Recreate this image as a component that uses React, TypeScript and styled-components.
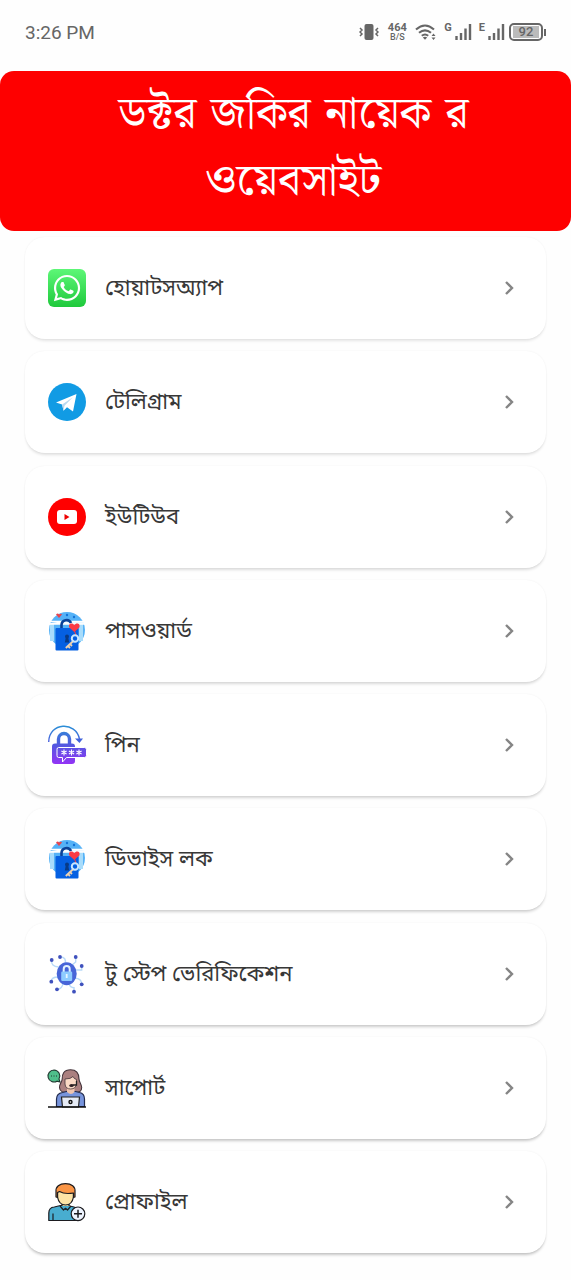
import React from "react";
import styled, { createGlobalStyle } from "styled-components";
import { FaWhatsapp } from "react-icons/fa";

const GlobalStyle = createGlobalStyle`
  * { box-sizing: border-box; }
  body {
    margin: 0;
    background: #fefefe;
    color: #383838;
    font-family: "Noto Sans Bengali", "Noto Sans", Roboto, sans-serif;
  }
`;

const Page = styled.div`
  min-height: 100vh;
  display: flex;
  flex-direction: column;
`;

const StatusBar = styled.div`
  display: flex;
  align-items: center;
  justify-content: space-between;
  height: 64px;
  padding: 0 25px;
  color: #666;
  font-family: Roboto, sans-serif;
`;

const Clock = styled.time`
  font-size: 19px;
`;

const StatusIcons = styled.div`
  display: flex;
  align-items: center;
`;

const Speed = styled.div`
  width: 20px;
  margin: 0 8px;
  text-align: center;
  font-size: 11px;
  font-weight: 700;
  line-height: 10px;
  small {
    display: block;
    font-size: 9px;
    font-weight: 500;
    line-height: 9px;
  }
`;

const Signal = styled.div`
  display: flex;
  align-items: flex-start;
  gap: 2px;
  margin-left: 7px;
  font-size: 11px;
  font-weight: 700;
  line-height: 10px;
`;

const Battery = styled.div`
  display: flex;
  align-items: center;
  margin-left: 4px;
`;

const BatteryBody = styled.div`
  width: 34px;
  height: 18px;
  border: 2px solid #666;
  border-radius: 5px;
  padding: 1px 2px;
`;

const BatteryLevel = styled.div`
  background: #bbb;
  font-size: 13px;
  font-weight: 500;
  line-height: 12px;
  text-align: center;
`;

const BatteryCap = styled.div`
  width: 2px;
  height: 7px;
  margin-left: 1px;
  background: #666;
`;

const Banner = styled.header`
  margin-top: 7px;
  padding: 8px 84px 18px 100px;
  background: #fe0000;
  border-radius: 14px;
`;

const Title = styled.h1`
  margin: 0;
  color: #fff;
  font-family: "DejaVu Serif", "Noto Serif Bengali", serif;
  font-size: 45px;
  font-weight: 400;
  line-height: 67px;
  text-align: center;
`;

const Menu = styled.nav`
  flex: 1;
  display: flex;
  flex-direction: column;
  justify-content: space-between;
  gap: 12px;
  padding: 6px 25px 27px;
`;

const Card = styled.button<{ $depth: number }>`
  display: flex;
  align-items: center;
  gap: 19px;
  width: 100%;
  height: 102px;
  padding: 0 31px 0 23px;
  border: 0;
  border-radius: 20px;
  background: #fff;
  color: inherit;
  font-family: inherit;
  text-align: left;
  box-shadow:
    0 0 2px rgba(0, 0, 0, 0.06),
    0 3px 3px -1px rgba(0, 0, 0, ${(p) => 0.1 + p.$depth * 0.016});
`;

const Label = styled.span`
  flex: 1;
  padding-top: 4px;
  font-size: 22px;
  line-height: 32px;
`;

const WhatsAppTile = styled.span`
  display: grid;
  place-items: center;
  width: 38px;
  height: 38px;
  border-radius: 6px;
  background: linear-gradient(#5df777, #1fc93c);
  color: #fff;
`;

const Icon = ({ children }: { children: React.ReactNode }) => (
  <svg width="38" height="38" viewBox="0 0 38 38" fill="none" overflow="visible" aria-hidden="true">
    {children}
  </svg>
);

const WhatsAppIcon = () => (
  <WhatsAppTile>
    <FaWhatsapp size={30} />
  </WhatsAppTile>
);

const TelegramIcon = () => (
  <Icon>
    <circle cx="19" cy="19" r="19" fill="#119be4" />
    <path d="M8 19.5 28.500 11 25 28.500l-6-4.300-3.500 3.600-1.400-6.300z" fill="#fff" />
    <path d="m14.200 21.400 10.600-7.200-8.300 8.500-1 5z" fill="#b9d9ef" />
  </Icon>
);

const YouTubeIcon = () => (
  <Icon>
    <circle cx="19" cy="19" r="19" fill="#f00" />
    <rect x="9" y="12" width="20" height="14" rx="3" fill="#fff" />
    <path d="m16.500 16 5 3-5 3z" fill="#e00" />
  </Icon>
);

const PasswordIcon = () => (
  <Icon>
    <circle cx="19" cy="18" r="18" fill="#55b2f7" />
    <path d="M4 12v17M33 12v17" stroke="#a8dcfb" strokeWidth="4" />
    <path d="M1 9.500h13M22 9.500h14l1 2.500H1z" stroke="#fff" strokeWidth="1.400" fill="#e9f6ff" />
    <circle cx="19" cy="3" r="1.200" fill="#1574d8" />
    <circle cx="26" cy="5" r="1.200" fill="#1574d8" />
    <path d="M8 2.500q2-2 3 0 2-1.500 3 0L11 6z" fill="#e8434e" />
    <path d="M13.500 17v-4a5 5 0 0 1 9.500-2" stroke="#0b4298" strokeWidth="2.600" />
    <rect x="7.500" y="16" width="23" height="22.500" rx="1" fill="#0560e2" />
    <path d="M17 24.500a2 2 0 1 1 4 0l-.6 2 .8 4h-4.400l.8-4z" fill="#083a86" />
    <path d="M26.300 20 21.300 15.500c-1.600-4 3-5.500 5-2.500 2-3 6.600-1.500 5 2.500z" fill="#fb3b46" />
    <path d="m26.500 19 1.500 4" stroke="#fb3b46" />
    <path d="m25.800 28.500-8 7.500M20 34l2 2M22 32l2 2" stroke="#efd3b0" strokeWidth="1.800" />
    <circle cx="27" cy="26.500" r="3.200" stroke="#c8e6ff" strokeWidth="2" />
  </Icon>
);

const PinIcon = () => (
  <Icon>
    <defs>
      <linearGradient id="pin" x1="0" y1="0" x2="0" y2="38" gradientUnits="userSpaceOnUse">
        <stop stopColor="#2b8fd6" />
        <stop offset=".5" stopColor="#5358e0" />
        <stop offset="1" stopColor="#9333f5" />
      </linearGradient>
    </defs>
    <path d="M.7 16C1-4 28-5 31.500 13" stroke="url(#pin)" strokeWidth="1.400" />
    <path d="M27 12.500h8L31.500 17z" fill="#4163db" />
    <path d="M10.500 19v-6a5.500 5.500 0 0 1 11 0v6" stroke="url(#pin)" strokeWidth="3.400" />
    <rect x="4" y="17.500" width="23" height="20.500" rx="3" fill="url(#pin)" />
    <path d="M10.500 21.500h26q2 0 2 2v6q0 2-2 2H18.500L14.500 36v-4.500h-4q-1.500 0-1.500-2v-6q0-2 1.500-2z" fill="url(#pin)" stroke="#fff" />
    {[16, 23.5, 31].map((x) => (
      <path key={x} d={`M${x} 23.500v6M${x - 2.6} 25l5.200 3M${x - 2.6} 28l5.200-3`} stroke="#fff" strokeWidth="1.100" />
    ))}
  </Icon>
);

const TwoStepIcon = () => (
  <Icon>
    <path
      d="M3.700 5q-1 6.500 7 7M12 2q7 0 5 7M27.700 2v5q-3 2-4 4M33.700 11v4h-6M3.300 26.700q0-4.700 7-4.700M9 34.300q5 0 6-6M33.700 29.300q0-6-7-6M26 36.700v-4q-4 0-5-4"
      stroke="#b9daf8"
      strokeWidth="1.400"
    />
    {[
      [3.7, 5],
      [12, 2],
      [27.7, 2],
      [33.7, 11],
      [3.3, 26.7],
      [9, 34.3],
      [33.7, 29.3],
      [26, 36.7],
    ].map(([x, y]) => (
      <circle key={`${x}-${y}`} cx={x} cy={y} r="1.900" fill="#3f51bd" />
    ))}
    <ellipse cx="18.700" cy="18.700" rx="10" ry="11.500" fill="#4765d8" />
    <path d="M15.700 18v-4a3 3 0 0 1 6 0v4" stroke="#e3f3ff" strokeWidth="2" />
    <rect x="13.200" y="16.500" width="11" height="9.500" rx="1.200" fill="#8ecbff" />
    <path d="M18.700 19v4" stroke="#e8f6ff" strokeWidth="1.800" />
  </Icon>
);

const SupportIcon = () => (
  <Icon>
    <path d="M6 1a6 6 0 1 0 3 11.200l3 .8-1-3A6 6 0 0 0 6 1z" fill="#4fbf8b" stroke="#20372f" strokeWidth="1.100" />
    <path d="M3 7h1M5.500 7h1M8 7h1" stroke="#20372f" />
    <path
      d="M22.500.700c-7 0-8.500 5-8.300 9.300-.2 3-3 5-2.700 8.500.2 4 4 5.500 7.500 4.500h8c4 1 6.800-1 6.700-4.500-.2-3.500-2.500-5-2.700-8.500C31 4.500 29 .7 22.500.7z"
      fill="#ab8080"
      stroke="#43333a"
      strokeWidth="1.100"
    />
    <path d="M8.500 37.500V30q0-5.500 6-6.500l4-1h9l4 1q5 1 5 6.500v7.500z" fill="#7794dc" stroke="#222b4d" strokeWidth="1.200" />
    <path d="M19 18v5q4 4 7.500 0v-5z" fill="#f0c4ad" />
    <path d="M17 10q6 0 8-2.500 1 2.500 3.500 3v4q-.5 5.500-5.800 5.500T17 15z" fill="#fad9c5" stroke="#43333a" strokeWidth=".8" />
    <path d="M28.500 12v4h-4" stroke="#222" strokeWidth="1.300" />
    <ellipse cx="23.500" cy="16.400" rx="2.200" ry="1.500" fill="#2d2025" />
    <path d="M13.500 28h18l-1 10h-16z" fill="#e6ebf5" stroke="#222" strokeWidth="1.200" />
    <circle cx="22.500" cy="33" r="1.500" fill="#fff" stroke="#111" strokeWidth="1.400" />
    <path d="M0 38h38" stroke="#111" strokeWidth="1.400" />
  </Icon>
);

const ProfileIcon = () => (
  <Icon>
    <g stroke="#1c1c20" strokeWidth="1.200" strokeLinejoin="round">
      <path d="M.8 37.500V30q0-5.500 5.500-6l6.200-1.500h7l6.500 1.500q4.500 1 4.500 7v6.500z" fill="#48add0" />
      <path d="M5 30.500v7" />
      <path d="M14 19.500v4l3.500 2.800 3.500-2.800v-4z" fill="#fbe2a4" />
      <path d="m12 23 3.500 4 2-1.700 2 1.700 3.500-4" fill="#48add0" />
      <path d="M9.500 8v6q1.500 8 8 8t8-8V8z" fill="#fde3a5" />
      <path d="M9.500 14.500 8 14V8.500C7.500 3.500 11.500.600 17.500.600S27.500 3.500 27 8.500V14l-1.500.5V10q-9 1.500-14-1.500l-2 1z" fill="#fa9545" />
      <circle cx="30" cy="30.800" r="6.800" fill="#eef4ff" />
      <path d="M26 30.800h8M30 26.800v8" strokeWidth="1.500" />
    </g>
  </Icon>
);

const Chevron = () => (
  <svg width="12" height="16" viewBox="0 0 12 16" fill="none" aria-hidden="true">
    <path d="m3 2 6 6-6 6" stroke="#858585" strokeWidth="2.400" />
  </svg>
);

const VibrateIcon = () => (
  <svg width="20" height="18" viewBox="0 0 20 18" fill="none" aria-hidden="true">
    <rect x="5.500" y="1" width="9" height="16" rx="2" fill="#666" />
    <path d="m1 5 2 2-2 2 2 2-2 2M19 5l-2 2 2 2-2 2 2 2" stroke="#666" strokeWidth="1.500" />
  </svg>
);

const WifiIcon = () => (
  <svg width="22" height="18" viewBox="0 0 22 18" fill="none" aria-hidden="true">
    <path d="M1 6.500q9-8 18 0M4 9.800q6-5 12 0M6.800 12.800q3.200-2.600 6.400 0" stroke="#666" strokeWidth="2.100" />
    <path d="m7.800 14.500 2.200 2.300 2.200-2.300q-2.200-1.400-4.400 0z" fill="#666" />
    <path d="m16.500 13 2-2.500 2 2.500zM16.500 14.500l2 2.500 2-2.500z" fill="#666" />
  </svg>
);

const Bars = () => (
  <svg width="18" height="18" viewBox="0 0 18 18" fill="none" aria-hidden="true">
    <path d="M2.500 17v-4M7 17v-7M11.500 17V5.500M16 17V1" stroke="#666" strokeWidth="2.400" />
  </svg>
);

const items = [
  { label: "হোয়াটসঅ্যাপ", icon: <WhatsAppIcon /> },
  { label: "টেলিগ্রাম", icon: <TelegramIcon /> },
  { label: "ইউটিউব", icon: <YouTubeIcon /> },
  { label: "পাসওয়ার্ড", icon: <PasswordIcon /> },
  { label: "পিন", icon: <PinIcon /> },
  { label: "ডিভাইস লক", icon: <PasswordIcon /> },
  { label: "টু স্টেপ ভেরিফিকেশন", icon: <TwoStepIcon /> },
  { label: "সাপোর্ট", icon: <SupportIcon /> },
  { label: "প্রোফাইল", icon: <ProfileIcon /> },
];

export default function App() {
  return (
    <Page>
      <GlobalStyle />
      <StatusBar>
        <Clock>3:26 PM</Clock>
        <StatusIcons>
          <VibrateIcon />
          <Speed>
            464<small>B/S</small>
          </Speed>
          <WifiIcon />
          <Signal>
            <span>G</span>
            <Bars />
          </Signal>
          <Signal>
            <span>E</span>
            <Bars />
          </Signal>
          <Battery>
            <BatteryBody>
              <BatteryLevel>92</BatteryLevel>
            </BatteryBody>
            <BatteryCap />
          </Battery>
        </StatusIcons>
      </StatusBar>
      <Banner>
        <Title>ডক্টর জকির নায়েক র ওয়েবসাইট</Title>
      </Banner>
      <Menu>
        {items.map((item, i) => (
          <Card key={item.label} type="button" $depth={i}>
            {item.icon}
            <Label>{item.label}</Label>
            <Chevron />
          </Card>
        ))}
      </Menu>
    </Page>
  );
}
